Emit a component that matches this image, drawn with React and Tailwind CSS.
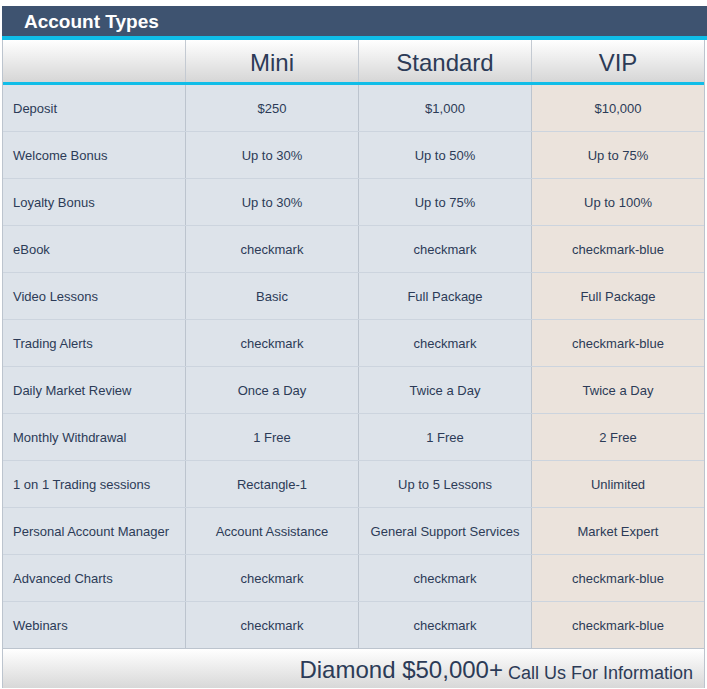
const rows = [
  ['Deposit', '$250', '$1,000', '$10,000'],
  ['Welcome Bonus', 'Up to 30%', 'Up to 50%', 'Up to 75%'],
  ['Loyalty Bonus', 'Up to 30%', 'Up to 75%', 'Up to 100%'],
  ['eBook', 'checkmark', 'checkmark', 'checkmark-blue'],
  ['Video Lessons', 'Basic', 'Full Package', 'Full Package'],
  ['Trading Alerts', 'checkmark', 'checkmark', 'checkmark-blue'],
  ['Daily Market Review', 'Once a Day', 'Twice a Day', 'Twice a Day'],
  ['Monthly Withdrawal', '1 Free', '1 Free', '2 Free'],
  ['1 on 1 Trading sessions', 'Rectangle-1', 'Up to 5 Lessons', 'Unlimited'],
  ['Personal Account Manager', 'Account Assistance', 'General Support Services', 'Market Expert'],
  ['Advanced Charts', 'checkmark', 'checkmark', 'checkmark-blue'],
  ['Webinars', 'checkmark', 'checkmark', 'checkmark-blue'],
];

export default function App() {
  return (
    <div className="w-[707px] h-[689px] bg-white pt-[6px] pl-[2px] font-['Liberation_Sans',Arial,sans-serif] text-[#2c3b57]">
      {/* title */}
      <div className="h-[34px] bg-[#3e5370] border-b-4 border-[#10bde8] pl-[22px] flex items-center">
        <span className="text-white font-bold text-[19px] leading-none">Account Types</span>
      </div>

      <div className="w-[703px] border-x border-[#bcc4ce]">
        {/* header */}
        <div className="grid grid-cols-[182px_173px_173px_173px] h-[45px] border-b-[3px] border-[#10bde8] bg-gradient-to-b from-white to-[#d6d6d6]">
          <div />
          {['Mini', 'Standard', 'VIP'].map((h) => (
            <div key={h} className="border-l border-[#c4cad2] flex items-center justify-center text-[24px] pt-[3px]">
              {h}
            </div>
          ))}
        </div>

        {rows.map((r) => (
          <div key={r[0]} className="grid grid-cols-[182px_173px_173px_173px] h-[47px] border-b border-[#ccd4de] text-[13px]">
            <div className="bg-[#dde3ea] flex items-center pl-[10px] pt-[2px]">{r[0]}</div>
            <div className="bg-[#dde3ea] border-l border-[#bcc4ce] flex items-center justify-center pt-[2px]">{r[1]}</div>
            <div className="bg-[#dde3ea] border-l border-[#bcc4ce] flex items-center justify-center pt-[2px]">{r[2]}</div>
            <div className="bg-[#ebe3dc] border-l border-[#bcc4ce] flex items-center justify-center pt-[2px]">{r[3]}</div>
          </div>
        ))}

        {/* footer */}
        <div className="h-[40px] border-t border-[#bcc4ce] -mt-px bg-gradient-to-b from-white to-[#d8d8d8] flex items-end justify-end pr-[11px] pb-[6px]">
          <span className="text-[24px] leading-none">Diamond $50,000+</span>
          <span className="text-[18px] leading-none ml-[5px]">Call Us For Information</span>
        </div>
      </div>
    </div>
  );
}
